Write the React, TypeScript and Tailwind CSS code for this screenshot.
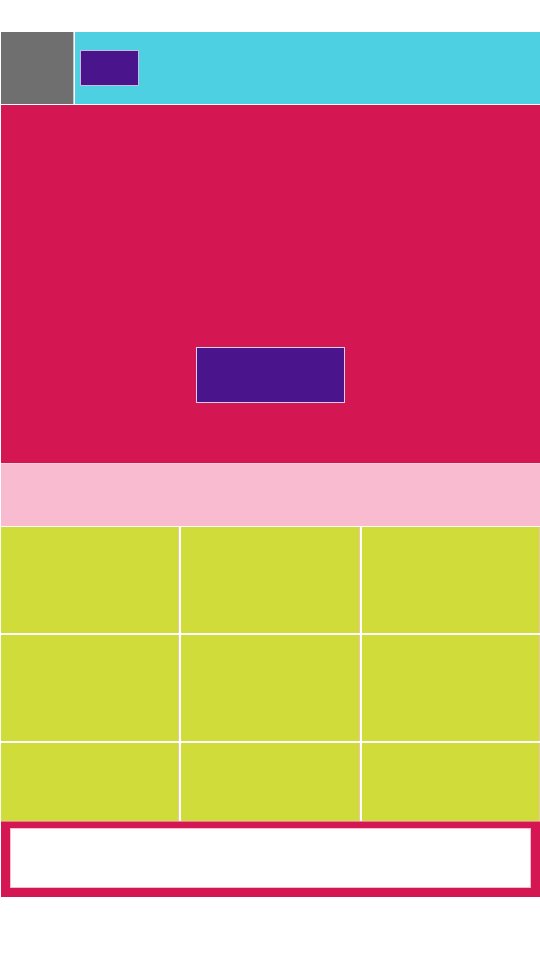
import React from "react";

const cells = ["h-[106px]", "h-[106px]", "h-[106px]", "h-[106px]", "h-[106px]", "h-[106px]", "h-[78px]", "h-[78px]", "h-[78px]"];

export default function App() {
    return (
        <div className="w-[540px] h-[960px] bg-white font-['Liberation_Sans',sans-serif]">
            <div className="h-[32px]" />
            <div className="pl-[1px]">
                {/* top bar */}
                <div className="flex h-[73px] border-b border-white/70">
                    <div className="w-[73px] bg-[#6f6f6f] border-r border-white/60" />
                    <div className="flex-1 bg-[#4dd0e1] pl-[5px] pt-[18px] ml-[1px]">
                        <div className="w-[59px] h-[36px] bg-[#4a148c] border border-white/70" />
                    </div>
                </div>

                {/* hero */}
                <div className="h-[359px] bg-[#d41752] flex flex-col items-center pt-[242px] border-b border-white/80">
                    <div className="w-[149px] h-[56px] bg-[#4a148c] border border-white/80" />
                </div>

                {/* pink band */}
                <div className="h-[63px] bg-[#f8bbd0] border-b border-white/90" />

                {/* grid */}
                <div className="grid grid-cols-3 gap-[2px] bg-white">
                    {cells.map((h, i) => (
                        <div key={i} className={`${h} bg-[#cfdc3a] border-r border-[#f8bbd0]/70`} />
                    ))}
                </div>

                {/* footer */}
                <div className="h-[76px] bg-[#d41752] pl-[9px] pr-[9px] pt-[6px] border-t border-[#f8bbd0]/60">
                    <div className="h-[60px] bg-white border border-[#f8bbd0]" />
                </div>
            </div>
        </div>
    );
}
